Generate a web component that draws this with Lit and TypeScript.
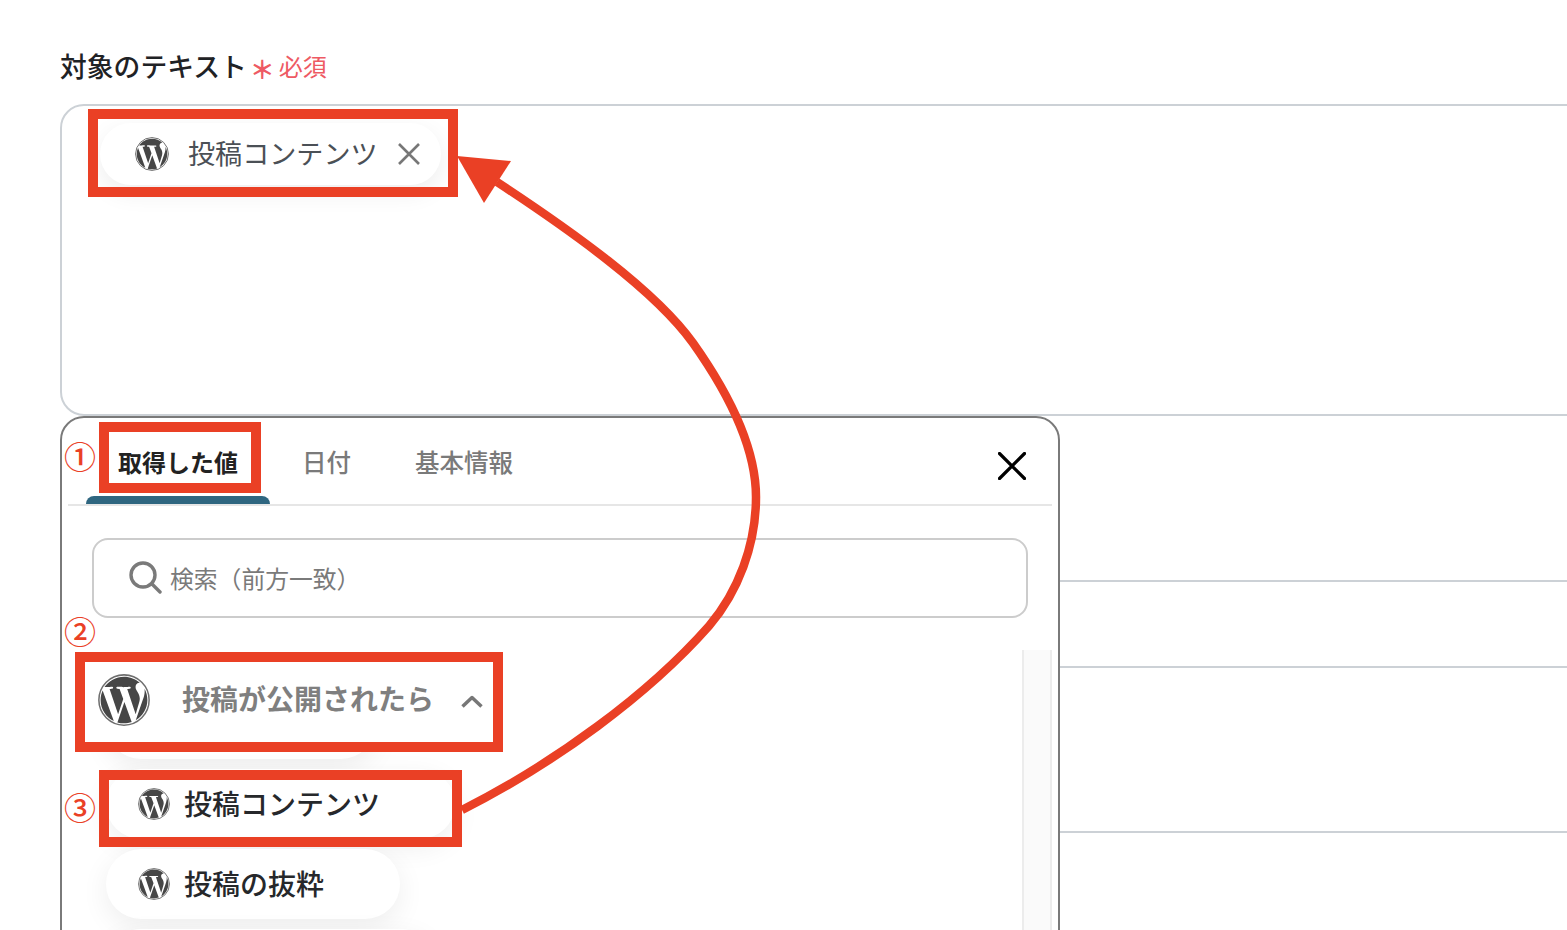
import { LitElement, html, css, svg } from "lit";
import { customElement } from "lit/decorators.js";

const WP = "M21.469 6.825c.84 1.537 1.318 3.3 1.318 5.175 0 3.979-2.156 7.456-5.363 9.325l3.295-9.527c.615-1.54.82-2.771.82-3.864 0-.405-.026-.78-.07-1.11m-7.981.105c.647-.03 1.232-.105 1.232-.105.582-.075.514-.93-.067-.899 0 0-1.755.135-2.88.135-1.064 0-2.85-.15-2.85-.15-.585-.03-.661.855-.075.885 0 0 .54.061 1.125.09l1.68 4.605-2.37 7.08L5.354 6.9c.649-.03 1.234-.1 1.234-.1.585-.075.516-.93-.065-.896 0 0-1.746.138-2.874.138-.2 0-.438-.008-.69-.015C4.911 3.15 8.235 1.215 12 1.215c2.809 0 5.365 1.072 7.286 2.833-.046-.003-.091-.009-.141-.009-1.06 0-1.812.923-1.812 1.914 0 .89.513 1.643 1.06 2.531.411.72.89 1.643.89 2.977 0 .915-.354 1.994-.821 3.479l-1.075 3.585-3.9-11.61.001.014zM12 22.784c-1.059 0-2.081-.153-3.048-.437l3.237-9.406 3.315 9.087c.024.053.05.101.078.149-1.12.393-2.325.609-3.582.609M1.211 12c0-1.564.336-3.05.935-4.39L7.29 21.709C3.694 19.96 1.212 16.271 1.211 12";

const wp = (cls: string) => html`<svg class="wp ${cls}" viewBox="0 0 24 24"><circle cx="12" cy="12" r="11.6" fill="none" stroke="#6e6e6e" stroke-width="0.7"></circle><path fill="#464646" d=${WP}></path></svg>`;

@customElement("app-root")
export class AppRoot extends LitElement {
  static styles = css`
    :host {
      display: block; position: relative; width: 1567px; height: 930px; overflow: hidden;
      background: #fff; font-family: "Noto Sans CJK JP", "Noto Sans", sans-serif; color: #222;
    }
    .page { padding: 47px 0 0 60px; width: 1600px; box-sizing: border-box; }
    .label { display: flex; align-items: center; height: 37px; margin-bottom: 20px; font-size: 26.8px; font-weight: 500; line-height: 37px; color: #1f2225; }
    .star { font-size: 25px; color: #ee5a63; margin-left: 3px; font-weight: 700; width: 29px; position: relative; top: 3px; }
    .req { font-size: 24px; font-weight: 400; color: #ee5a63; }
    .field { height: 312px; box-sizing: border-box; border: 2px solid #ccd1d6; border-radius: 24px; padding: 17px 0 0 38px; background: #fff; }
    .chip {
      display: inline-flex; align-items: center; height: 62px; width: 341px; box-sizing: border-box; padding-left: 35px;
      border-radius: 31px; background: #fff; box-shadow: 0 8px 24px rgba(0, 0, 0, 0.07); font-size: 27.1px; color: #4b5056;
    }
    .chip-text { margin-left: 19px; margin-bottom: 4px; white-space: nowrap; }
    .chip-x { margin-left: 19px; width: 24px; height: 24px; }
    .wp { display: block; flex: none; }
    .wp.s34 { width: 34px; height: 34px; }
    .wp.s32 { width: 32px; height: 32px; }
    .wp.s52 { width: 52px; height: 52px; }
    .line { border-bottom: 2px solid #ccd1d6; box-sizing: border-box; }
    .l1 { height: 166px; } .l2 { height: 86px; } .l3 { height: 165px; }
    .panel {
      position: absolute; left: 60px; top: 416px; width: 1000px; height: 560px; box-sizing: border-box;
      border: 2px solid #7a7a7a; border-radius: 24px; background: #fff; padding: 0 6px;
    }
    .tabs { display: flex; align-items: stretch; height: 88px; padding-left: 18px; border-bottom: 2px solid #e6e6e6; box-sizing: border-box; }
    .tab { display: flex; flex-direction: column; align-items: center; padding: 27px 32px 0; font-size: 24.5px; font-weight: 500; color: #7a7a7a; position: relative; line-height: 34px; box-sizing: border-box; }
    .tab.active { color: #222; font-weight: 700; font-size: 24px; }
    .bar { position: absolute; left: 0; right: 0; bottom: 0; height: 8px; background: #2f6680; border-radius: 8px 8px 0 0; }
    .close { margin-left: auto; margin-right: 26px; margin-top: 34px; width: 28px; height: 28px; }
    .search {
      display: flex; align-items: center; height: 80px; margin: 32px 24px 0; box-sizing: border-box; padding: 0 0 2px 34px;
      border: 2px solid #ccc; border-radius: 16px; font-size: 23.8px; color: #7a7a7a;
    }
    .search svg { width: 34px; height: 34px; margin-right: 8px; flex: none; }
    .body { display: flex; margin-top: 32px; height: 400px; position: relative; }
    .list { flex: 1; padding: 39px 0 0 38px; display: flex; flex-direction: column; gap: 10px; }
    .track { width: 30px; box-sizing: border-box; background: #fafafa; border-left: 2px solid #ececec; border-right: 2px solid #ececec; }
    .pill {
      display: flex; align-items: center; height: 70px; flex: none; box-sizing: border-box; padding-left: 32px; border-radius: 35px;
      background: #fff; box-shadow: 0 8px 28px rgba(0, 0, 0, 0.07); font-size: 28px; font-weight: 500; color: #26282b; white-space: nowrap;
    }
    .pill span { margin-left: 14px; margin-bottom: 2px; }
    .w0 { width: 270px; } .w1 { width: 349px; } .w2 { width: 294px; } .w3 { width: 330px; }
    .group {
      position: absolute; left: 16px; top: 8px; width: 408px; height: 84px; display: flex; align-items: center; padding-left: 14px;
      box-sizing: border-box; background: #fff; font-size: 28px; font-weight: 700; color: #7f7f7f; white-space: nowrap;
    }
    .group .name { margin-left: 32px; margin-bottom: 4px; }
    .group svg.chev { width: 24px; height: 16px; margin-left: 26px; margin-top: 3px; }
    .box { position: absolute; box-sizing: border-box; border: 10px solid #ea4025; }
    .b1 { left: 88px; top: 109px; width: 370px; height: 88px; }
    .b2 { left: 99px; top: 422px; width: 162px; height: 71px; }
    .b3 { left: 75px; top: 652px; width: 428px; height: 100px; }
    .b4 { left: 99px; top: 770px; width: 363px; height: 77px; }
    .num { position: absolute; left: 64px; width: 32px; text-align: center; font-size: 32px; font-weight: 500; line-height: 32px; color: #ea4025; }
    .n1 { top: 439px; } .n2 { top: 614px; } .n3 { top: 790px; }
    .arrow { position: absolute; left: 0; top: 0; width: 1567px; height: 930px; pointer-events: none; }
  `;

  render() {
    return html`
      <div class="page">
        <div class="label">対象のテキスト<span class="star">＊</span><span class="req">必須</span></div>
        <div class="field">
          <div class="chip">
            ${wp("s34")}
            <span class="chip-text">投稿コンテンツ</span>
            <svg class="chip-x" viewBox="0 0 24 24"><path d="M2 2L22 22M22 2L2 22" stroke="#777" stroke-width="2.6" fill="none"></path></svg>
          </div>
        </div>
        <div class="line l1"></div>
        <div class="line l2"></div>
        <div class="line l3"></div>
      </div>

      <div class="panel">
        <div class="tabs">
          <div class="tab active">取得した値<div class="bar"></div></div>
          <div class="tab">日付</div>
          <div class="tab">基本情報</div>
          <svg class="close" viewBox="0 0 28 28"><path d="M1.5 1.5L26.5 26.5M26.5 1.5L1.5 26.5" stroke="#000" stroke-width="3.2" stroke-linecap="round" fill="none"></path></svg>
        </div>
        <div class="search">
          <svg viewBox="0 0 34 34"><circle cx="15" cy="15" r="12" fill="none" stroke="#7a7a7a" stroke-width="3.4"></circle><path d="M24 24L32 32" stroke="#7a7a7a" stroke-width="3.4" stroke-linecap="round"></path></svg>
          検索（前方一致）
        </div>
        <div class="body">
          <div class="list">
            <div class="pill w0"></div>
            <div class="pill w1">${wp("s32")}<span>投稿コンテンツ</span></div>
            <div class="pill w2">${wp("s32")}<span>投稿の抜粋</span></div>
            <div class="pill w3"></div>
          </div>
          <div class="track"></div>
          <div class="group">
            ${wp("s52")}
            <span class="name">投稿が公開されたら</span>
            <svg class="chev" viewBox="0 0 24 16"><path d="M2.5 12.5L12 3.5L21.5 12.5" stroke="#777" stroke-width="3.5" stroke-linejoin="round" fill="none"></path></svg>
          </div>
        </div>
      </div>

      <div class="box b1"></div>
      <div class="box b2"></div>
      <div class="box b3"></div>
      <div class="box b4"></div>
      <div class="num n1">①</div>
      <div class="num n2">②</div>
      <div class="num n3">③</div>

      <svg class="arrow" viewBox="0 0 1567 930">
        ${svg`<path d="M462 810C555 763 648 695 709 626C738 592 756 545 756 497C756 445 727 391 693 343C655 290 570 230 497 182" fill="none" stroke="#ea4025" stroke-width="8.5"></path>
        <path d="M457 156L511 161L484 203Z" fill="#ea4025"></path>`}
      </svg>
    `;
  }
}
